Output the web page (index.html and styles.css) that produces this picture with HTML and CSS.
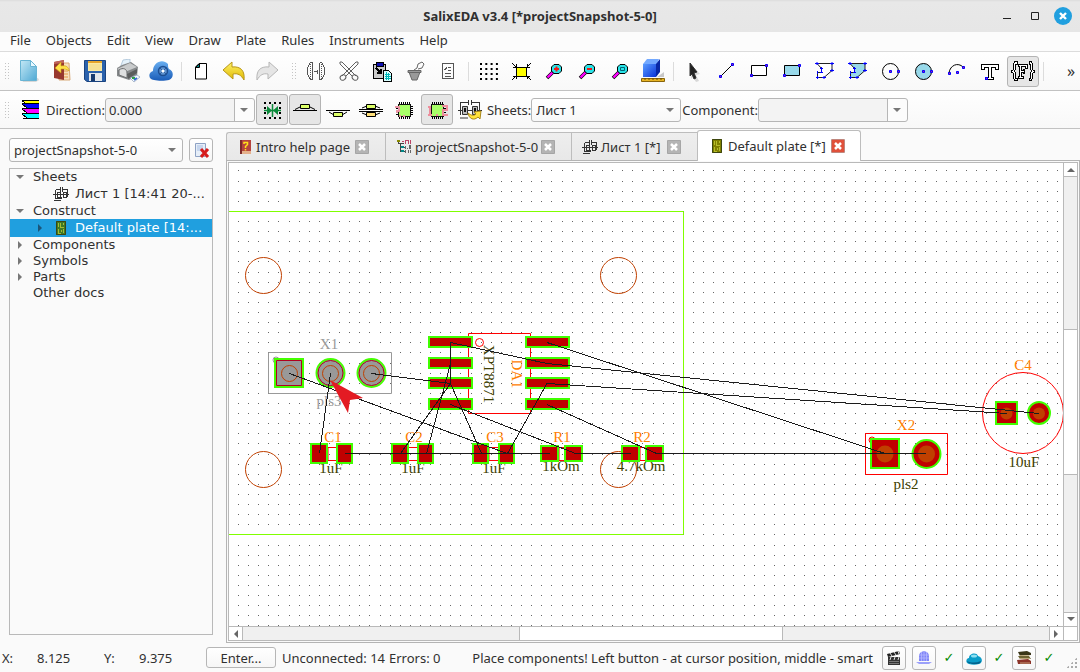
FILE: index.html
```html
<!DOCTYPE html>
<html lang="en">
<head>
<meta charset="utf-8">
<title>SalixEDA v3.4 [*projectSnapshot-5-0]</title>
<link rel="stylesheet" href="styles.css">
</head>
<body>
<svg class="defs" width="0" height="0" aria-hidden="true">
  <defs>
    <linearGradient id="page" x1="0" y1="0" x2="1" y2="1"><stop offset="0" stop-color="#c4e8f5"/><stop offset="1" stop-color="#4fa9d4"/></linearGradient>
    <linearGradient id="cube" x1="0" y1="0" x2="1" y2="1"><stop offset="0" stop-color="#5a9cff"/><stop offset="1" stop-color="#0b35d8"/></linearGradient>
    <linearGradient id="gold" x1="0" y1="0" x2="0" y2="1"><stop offset="0" stop-color="#fff36a"/><stop offset="1" stop-color="#e0b800"/></linearGradient>
    <linearGradient id="cloudfill" x1="0" y1="0" x2="0" y2="1"><stop offset="0" stop-color="#68aef0"/><stop offset="1" stop-color="#1a5cb8"/></linearGradient>
    <symbol id="sheet" viewBox="0 0 16 16"><g fill="none" stroke="#333" shape-rendering="crispEdges"><path d="M2.500 3.500H7M9 3.500H14.500M7.500 1v5M9.500 1v5M2.500 3.500v9M14.500 3.500v7M0 8.500H16M4.500 6.500h3v5h-3zM10.500 6.500h3v5h-3zM2.500 12.500h6v-2M1 14.500h7"/></g></symbol>
    <symbol id="plate" viewBox="0 0 16 16"><path d="M3 1h10v14H3z" fill="currentColor"/><path d="M5.500 3v4M7.500 3v4h3M10.500 3v2M5.500 9v4h2M8.500 10v2M10.500 9v4" fill="none" stroke="#c8d23a" stroke-opacity=".75" shape-rendering="crispEdges"/><path d="M3.500 1.500h9v13h-9z" fill="none" stroke="#3c4610"/></symbol>
    <symbol id="close" viewBox="0 0 14 14"><path d="M.5.5h13v13H.5z" fill="currentColor" stroke="#0003"/><path d="M4 4l6 6M10 4l-6 6" stroke="#fff" stroke-width="2.500"/></symbol>
    <symbol id="glass" viewBox="0 0 24 24"><path d="M5 19l6-6" stroke="#000" stroke-width="3.600"/><path d="M5.500 18.500l5-5" stroke="#f0f" stroke-width="2.400"/><path d="M12 5.500h5l2.500 2.500v4L17 14.500h-5L9.500 12V8z" fill="#28e4e8" stroke="#000"/></symbol>
  </defs>
</svg>

<header class="titlebar">
  <h1>SalixEDA v3.4 [*projectSnapshot-5-0]</h1>
  <div class="wincontrols">
    <button aria-label="Minimize"><svg width="10" height="16"><path d="M1 10.500h8" stroke="#222" shape-rendering="crispEdges"/></svg></button>
    <button aria-label="Maximize"><svg width="10" height="16"><path d="M1.500 4.500h7v7h-7z" fill="none" stroke="#222"/></svg></button>
    <button aria-label="Close"><svg width="18" height="18"><circle cx="9" cy="9" r="9" fill="#209fdf"/><path d="M6 6l6 6M12 6l-6 6" stroke="#fff" stroke-width="2.400"/></svg></button>
  </div>
</header>

<nav class="menubar" aria-label="Main menu">
  <button>File</button><button>Objects</button><button>Edit</button><button>View</button><button>Draw</button><button>Plate</button><button>Rules</button><button>Instruments</button><button>Help</button>
</nav>

<div class="toolbar" role="toolbar" aria-label="Tools">
  <span class="grip first"></span>
  <button aria-label="New"><svg viewBox="0 0 24 24"><path d="M5 21l16-2 1 2-3 2H6z" fill="#0002"/><path d="M3.500 1.500h10l6 6v14h-16z" fill="url(#page)" stroke="#68b4d4"/><path d="M13.500 1.500v6h6z" fill="#e8f8ff" stroke="#68b4d4"/></svg></button>
  <button aria-label="Open"><svg viewBox="0 0 24 24"><path d="M9 4h10l1 17H9z" fill="#f7dfbd" stroke="#d8a978"/><path d="M11 12h7M12 15h6M11 18h7" stroke="#e39a45"/><path d="M4 3l10-2v20L4 19z" fill="#98382e"/><path d="M4 3l10-2v3L4 5z" fill="#bf655a"/><path d="M5 9l6-6v4c5-1 8 1 8 5-2-2-4-2-8-2v4z" fill="#ffe24a" stroke="#c79b10" stroke-width=".6"/></svg></button>
  <button aria-label="Save"><svg viewBox="0 0 24 24"><path d="M1.500 1.500h21v21H4l-2.500-2z" fill="#2b62ac" stroke="#1b4480"/><path d="M5 2h14v10H5z" fill="#fbe9a0"/><path d="M5 2h14v2H5z" fill="#e6a52c"/><path d="M6 6h12M6 8h12M6 10h12" stroke="#f0d98a"/><path d="M6 14h13v8H6z" fill="#e3e8ec"/><path d="M8 15h4v7H8z" fill="#173b70"/></svg></button>
  <button aria-label="Print"><svg viewBox="0 0 24 24"><path d="M4 9L7 1l7-1v9z" fill="#e4f1fa" stroke="#9db9d1" stroke-width=".7"/><path d="M1 9l5-3 9-3 7 5-1 9-8 4L1 17z" fill="#86898b"/><path d="M1 10l13-6 7 4-12 5z" fill="#c9cbcc"/><path d="M3 11c4-3 8-1 8 3v5l-8-3z" fill="#dedfe0" stroke="#6c6e70"/><path d="M11 15l10-5v4l-9 6z" fill="#5a5c5d"/><path d="M14 19l7-3 3 2-6 5z" fill="#f6f9ff" stroke="#7890ad" stroke-width=".6"/><path d="M16 19h3" stroke="#2ca042" stroke-width="2"/><path d="M18 21l3-2" stroke="#356bd2" stroke-width="2"/></svg></button>
  <button aria-label="Cloud"><svg viewBox="0 0 24 24"><path d="M5 21C-1 21-1 13 4 12c0-8 9-13 15-7 0 2 0 4 1 5 5 2 5 9 0 11-4 1-11 1-15 0z" fill="url(#cloudfill)"/><circle cx="14" cy="12" r="4.500" fill="#5d92cf" stroke="#1c4e92" stroke-width="1.500"/><path d="M11 9l6 6M17 9l-6 6" stroke="#2d5b9c"/><circle cx="14" cy="12" r="1.500" fill="#fff"/></svg></button>
  <span class="sep"></span>
  <button aria-label="Blank page"><svg viewBox="0 0 24 24"><path d="M10 4.500h7.500v15.500h-11V8z" fill="#fff" stroke="#000"/><path d="M6.500 8.500l4-4v4z" fill="#008080" stroke="#000"/></svg></button>
  <button aria-label="Undo"><svg viewBox="0 0 24 24"><path d="M1 11l9-8v5c9-1 13 4 12 13-3-5-6-7-11-6v5z" fill="url(#gold)" stroke="#b8961a"/></svg></button>
  <button aria-label="Redo"><svg viewBox="0 0 24 24"><path d="M23 11l-9-8v5C5 7 1 12 2 21c3-5 6-7 11-6v5z" fill="#e5e5e5" stroke="#b7b7b7"/></svg></button>
  <span class="grip"></span>
  <button aria-label="Mirror"><svg viewBox="0 0 24 24" fill="none" stroke="#555" shape-rendering="crispEdges"><path d="M8.500 3.500v17M8.500 3.500h-2l-3 5v7l3 5h2M15.500 3.500v17M15.500 3.500h2l3 5v7l-3 5h-2M10 12.500h4M13.500 11v4"/><path d="M6.500 5v15M17.500 5v15" stroke-dasharray="1 1"/></svg></button>
  <button aria-label="Cut"><svg viewBox="0 0 24 24" fill="none" stroke="#606060"><path d="M3 3l2 0 14 14M21 3l-2 0L5 17M3 3v2l12 12M21 3v2L9 17"/><ellipse cx="6" cy="18.500" rx="3" ry="2.500" transform="rotate(-35 6 18.500)"/><ellipse cx="18" cy="18.500" rx="3" ry="2.500" transform="rotate(35 18 18.500)"/></svg></button>
  <button aria-label="Copy"><svg viewBox="0 0 24 24" shape-rendering="crispEdges"><path d="M3.500 5.500h12v14h-12z" fill="#ccc" stroke="#000"/><path d="M6 3h7v4H6z" fill="#1010b0" stroke="#000"/><path d="M6 9l5 5M11 10v4H7" stroke="#000" stroke-width="1.500" fill="none"/><path d="M13.500 11.500h5l3 3v8h-8z" fill="#d8ffff" stroke="#000"/><path d="M15 15h5M15 17h6M15 19h6M16.500 13v8M18.500 14v7" stroke="#0bb"/></svg></button>
  <button aria-label="Paste"><svg viewBox="0 0 24 24" fill="none" stroke="#666"><path d="M6 13h11l-3 8H9z" fill="#999"/><path d="M5 11.500h13v2H5z" fill="#999"/><path d="M11 11l3-2 1-4 4-2 2 2-2 4-4 1"/></svg></button>
  <button aria-label="Properties"><svg viewBox="0 0 24 24" fill="none" stroke="#555" shape-rendering="crispEdges"><path d="M6.500 4.500h11v15h-11z"/><path d="M12 8.500h3M8 10l1 1 2-3M12 11.500h3M9 14.500h6M9 17.500h6"/></svg></button>
  <span class="sep"></span>
  <button aria-label="Grid"><svg viewBox="0 0 24 24"><path d="M4 5h18M4 10h18M4 15h18M4 20h18" stroke="#000" stroke-width="2" stroke-dasharray="2 3.300"/></svg></button>
  <button aria-label="Fit"><svg viewBox="0 0 24 24" stroke="#000" shape-rendering="crispEdges"><path d="M7.500 8.500h10v9h-10z" fill="#ff0"/><path d="M3 4l4 4M7 5v3H4M22 4l-4 4M18 5v3h3M3 21l4-4M7 20v-3H4M22 21l-4-4M18 20v-3h3" fill="none"/></svg></button>
  <button aria-label="Zoom in"><svg viewBox="0 0 24 24"><use href="#glass"/><path d="M12 10h5M14.500 7.500v5" stroke="#f01818" stroke-width="2"/></svg></button>
  <button aria-label="Zoom out"><svg viewBox="0 0 24 24"><use href="#glass"/><path d="M12 10h5" stroke="#f01818" stroke-width="2"/></svg></button>
  <button aria-label="Zoom window"><svg viewBox="0 0 24 24"><use href="#glass"/><path d="M12.500 8.500h4v3h-4z" fill="none" stroke="#067"/></svg></button>
  <button aria-label="3D view"><svg viewBox="0 0 24 24"><path d="M16 18l7-5v5z" fill="#0003"/><path d="M2 5l4-5h12l-2 5z" fill="#73a9ff"/><path d="M2 5h13v13H2z" fill="url(#cube)"/><path d="M15 5l4-5v13l-4 5z" fill="#0828a5"/><path d="M.5 19.500h23v3H.5z" fill="#e6b323" stroke="#88640b"/><path d="M4 19v2M8 19v2M12 19v2M16 19v2M20 19v2" stroke="#6b4d05"/></svg></button>
  <span class="sep"></span>
  <button aria-label="Select"><svg viewBox="0 0 24 24"><path d="M11 7l8 8-4 1 3 6-3 1-3-5-2 2z" fill="#0002"/><path d="M9 4l7 9-3 1 2 5-2 1-2-5-2 2z" fill="#222" stroke="#333"/></svg></button>
  <button aria-label="Line"><svg viewBox="0 0 24 24"><path d="M6 18L18 6" stroke="#000"/><path d="M5.500 16.500h2v2h-2zM17.500 4.500h2v2h-2z" fill="#c0169a" stroke="#00f"/></svg></button>
  <button aria-label="Rectangle"><svg viewBox="0 0 24 24"><path d="M4.500 6.500h15v10h-15z" fill="#fff" stroke="#000"/><path d="M3.500 15.500h2v2h-2zM18.500 5.500h2v2h-2z" fill="#c0169a" stroke="#00f"/></svg></button>
  <button aria-label="Filled rectangle"><svg viewBox="0 0 24 24"><path d="M4.500 6.500h15v10h-15z" fill="#98d9ea" stroke="#000"/><path d="M3.500 15.500h2v2h-2zM18.500 5.500h2v2h-2z" fill="#c0169a" stroke="#00f"/></svg></button>
  <button aria-label="Polygon"><svg viewBox="0 0 24 24"><path d="M4 4.500h15v7l-8 7H4.500v-5h4v-4z" fill="#fff" stroke="#222"/><path d="M4 3v3M2 4.500h4M19 3v3M17 4.500h4M19 10v3M17 11.500h4M11 17v3M9 18.500h4M4.500 17v3M3 18.500h3M8.500 8v6M7 9.500h3M7 13.500h3M4.500 12v3" stroke="#00f"/></svg></button>
  <button aria-label="Filled polygon"><svg viewBox="0 0 24 24"><path d="M4 4.500h15v7l-8 7H4.500v-5h4v-4z" fill="#98d9ea" stroke="#222"/><path d="M4 3v3M2 4.500h4M19 3v3M17 4.500h4M19 10v3M17 11.500h4M11 17v3M9 18.500h4M4.500 17v3M3 18.500h3M8.500 8v6M7 9.500h3M7 13.500h3M4.500 12v3" stroke="#00f"/></svg></button>
  <button aria-label="Circle"><svg viewBox="0 0 24 24"><circle cx="11.500" cy="12.500" r="8" fill="none" stroke="#000"/><path d="M10.500 11.500h2v2h-2zM18.500 11.500h2v2h-2z" fill="#c0169a" stroke="#00f"/></svg></button>
  <button aria-label="Filled circle"><svg viewBox="0 0 24 24"><circle cx="11.500" cy="12.500" r="8" fill="#98d9ea" stroke="#000"/><path d="M10.500 11.500h2v2h-2zM18.500 11.500h2v2h-2z" fill="#c0169a" stroke="#00f"/></svg></button>
  <button aria-label="Arc"><svg viewBox="0 0 24 24"><path d="M4 14c1-8 9-11 14-6" fill="none" stroke="#000"/><path d="M3.500 13.500h2v2h-2zM11.500 12.500h2v2h-2zM17.500 7.500h2v2h-2z" fill="#c0169a" stroke="#00f"/></svg></button>
  <button aria-label="Text"><svg viewBox="0 0 24 24" shape-rendering="crispEdges"><path d="M3.500 5.500h17v5h-3v-2h-4v10h2v2h-7v-2h2v-10h-4v2h-3z" fill="#fff" stroke="#000"/><path d="M7.500 18.500h2v2h-2z" fill="#c0169a" stroke="#00f"/></svg></button>
  <button class="on" aria-label="Formatted text" aria-pressed="true"><svg viewBox="0 0 24 24" fill="#fff" stroke="#000" shape-rendering="crispEdges"><path d="M6 2.500H4l-1.500 2v6l-2 1.500v1l2 1.500v5l1.500 2h2v-2H4.500v-5l-1-2.500 1-2v-5H6zM18 2.500h2l1.500 2v6l2 1.500v1l-2 1.500v5l-1.500 2h-2v-2h1.500v-5l1-2.500-1-2v-5H18z"/><path d="M7.500 5.500h9v4h-2v-2h-4v4h2v-1h1v4h-1v-1h-2v4h2v2h-5v-2h1v-10h-1z"/></svg></button>
  <span class="sep"></span>
  <button class="more" aria-label="More tools">»</button>
</div>

<div class="toolbar" role="toolbar" aria-label="Placement">
  <span class="grip first"></span>
  <button aria-label="Layers"><svg viewBox="0 0 24 24" shape-rendering="crispEdges"><path d="M5 3h17v2H9z" fill="#ff0"/><path d="M5 6h17v4H10z" fill="#00f"/><path d="M5 11h17v4H10z" fill="#f0f"/><path d="M5 16h17v4H10z" fill="#0ff"/><path d="M5 2.500h17M5 5.500h17M5 10.500h17M5 15.500h17M6 20.500h16M5 3l5 3M5 6l5 4M5 11l5 4M5 16l5 4" stroke="#000"/></svg></button>
  <label for="direction">Direction:</label>
  <span class="combo editable"><select id="direction"><option>0.000</option></select></span>
  <button class="on" aria-label="Snap" aria-pressed="true"><svg viewBox="0 0 24 24"><path d="M4 5h18M4 20h18" stroke="#000" stroke-width="2" stroke-dasharray="2 3"/><path d="M5 9v2M5 14v2M20 9v2M20 14v2" stroke="#000" stroke-width="2"/><path d="M12.500 6v13M4 12.500h17" stroke="#0a8a3a" stroke-width="1.500"/><path d="M7 8l5 4.500L7 17zM18 8l-5 4.500 5 4.500z" fill="#0a8a3a"/></svg></button>
  <button class="on" aria-label="Top side" aria-pressed="true"><svg viewBox="0 0 24 24"><path d="M0 12.500h24" stroke="#000"/><path d="M2 11.500l6-3M22 11.500l-6-3" stroke="#000"/><path d="M7.500 6.500h9v4h-9z" fill="#dcff68" stroke="#000"/></svg></button>
  <button aria-label="Bottom side"><svg viewBox="0 0 24 24"><path d="M0 12.500h24" stroke="#000"/><path d="M3 14l5 3M21 14l-5 3" stroke="#000"/><path d="M7.500 14.500h9v4h-9z" fill="#dcff68" stroke="#000"/></svg></button>
  <button aria-label="Both sides"><svg viewBox="0 0 24 24"><path d="M0 11.500h24M0 13.500h24" stroke="#000"/><path d="M3 10l5-2M21 10l-5-2M3 15l5 2M21 15l-5 2" stroke="#000"/><path d="M7.500 6.500h9v4h-9z" fill="#dcff68" stroke="#000"/><path d="M7.500 14.500h9v4h-9z" fill="#ffdf7a" stroke="#000"/></svg></button>
  <button aria-label="Component query"><svg viewBox="0 0 24 24" shape-rendering="crispEdges"><path d="M7.500 4v17M9.500 4v17M11.500 4v17M13.500 4v17M15.500 4v17M17.500 4v17M4 8.500h17M4 10.500h17M4 12.500h17M4 14.500h17M4 16.500h17" stroke="#000"/><path d="M6.500 6.500h12v12h-12z" fill="#a8ff68" stroke="#111"/><path d="M3 9h4v4H5v2M7 17.500h2M11 17.500h2" fill="none" stroke="#e995a5" stroke-width="2"/></svg></button>
  <button class="on" aria-label="Component numbering" aria-pressed="true"><svg viewBox="0 0 24 24" shape-rendering="crispEdges"><path d="M7.500 4v17M9.500 4v17M11.500 4v17M13.500 4v17M15.500 4v17M17.500 4v17M4 8.500h17M4 10.500h17M4 14.500h17M4 16.500h17" stroke="#000"/><path d="M6.500 6.500h12v12h-12z" fill="#a8ff68" stroke="#111"/><path d="M3 9h2v8M3 17h4M11 17h2M17 8h5v4h-4v5h5" fill="none" stroke="#ee8d9c" stroke-width="2"/></svg></button>
  <button aria-label="Sheet transfer"><svg viewBox="0 0 24 24"><path d="M2 4.500h9M13 4.500h9M10.500 2v5M13.500 2v5M2.500 4v13M21.500 4v12M0 12.500h24M2 20h8" stroke="#333" fill="none"/><path d="M4.500 8.500h5v8h-5zM14.500 8.500h5v8h-5z" fill="#bbb" stroke="#333"/><path d="M7 10v4M17 10v4" stroke="#111" stroke-width="2"/><path d="M10 15c4 3 6 3 8 1l-2-2 7-1-1 8-2-2c-4 4-9 2-10-4z" fill="#ffe23a" stroke="#a8861a"/></svg></button>
  <label for="sheets">Sheets:</label>
  <span class="combo"><select id="sheets"><option>Лист 1</option></select></span>
  <label for="component">Component:</label>
  <span class="combo editable"><select id="component"><option></option></select></span>
</div>

<main class="workspace">
  <aside class="side">
    <div class="siderow">
      <span class="combo"><select aria-label="Project"><option>projectSnapshot-5-0</option></select></span>
      <button class="small" aria-label="Close project"><svg width="18" height="18"><path d="M3.500 2.500h10v13h-10z" fill="#e6eef8" stroke="#8ea2c4"/><path d="M5 4h6v6H5z" fill="#c6d6ee"/><path d="M9 8l7 8M16 8l-7 8" stroke="#d61b1b" stroke-width="3"/></svg></button>
    </div>
    <ul class="tree">
      <li><i class="tri open"></i>Sheets</li>
      <li class="leaf"><i class="tri none"></i><svg width="16" height="16"><use href="#sheet"/></svg><span>Лист 1 [14:41 20-...</span></li>
      <li><i class="tri open"></i>Construct</li>
      <li class="leaf selected"><i class="tri"></i><svg class="pgreen" width="16" height="16"><use href="#plate"/></svg><span>Default plate [14:...</span></li>
      <li><i class="tri"></i>Components</li>
      <li><i class="tri"></i>Symbols</li>
      <li><i class="tri"></i>Parts</li>
      <li><i class="tri none"></i>Other docs</li>
    </ul>
  </aside>

  <section class="editor">
    <div class="tabs">
      <div class="tab t1"><button><svg width="16" height="16"><path d="M3 1h11v14H3z" fill="#b5443e"/><path d="M3 12h11v3H3z" fill="#e5b08c"/><path d="M3 1h2v14H3z" fill="#7d2a2a"/><path d="M7 5V3.500h3.500v2L8.500 7.500v1.500M8.500 10v1.500" fill="none" stroke="#ffe21a" stroke-width="1.500"/></svg>Intro help page</button><button class="x" aria-label="Close tab"><svg width="14" height="14"><use href="#close"/></svg></button></div>
      <div class="tab t2"><button><svg width="16" height="16" shape-rendering="crispEdges"><path d="M2.500 2v3M4.500 5v8M2 4.500h6M5 8.500h4M5 12.500h4" stroke="#444"/><path d="M1 1h3v2H1z" fill="#880"/><path d="M6 2.500h2M9.500 1v4M10 1.500h2M12.500 1v4M14.500 1v4" stroke="#b46"/><path d="M5 7h3v2H5zM5 11h3v2H5z" fill="#088"/><path d="M9.500 7v3M11 9.500h1M13 6l2 4M15 6l-2 4M9.500 11v3M12.500 11v3M14.500 11v3" stroke="#666" fill="none"/></svg>projectSnapshot-5-0</button><button class="x" aria-label="Close tab"><svg width="14" height="14"><use href="#close"/></svg></button></div>
      <div class="tab t3"><button><svg width="16" height="16"><use href="#sheet"/></svg>Лист 1 [*]</button><button class="x" aria-label="Close tab"><svg width="14" height="14"><use href="#close"/></svg></button></div>
      <div class="tab t4 active"><button><svg class="polive" width="16" height="16"><use href="#plate"/></svg>Default plate [*]</button><button class="x" aria-label="Close tab"><svg width="14" height="14"><use href="#close"/></svg></button></div>
    </div>
    <div class="frame">
      <div class="view">
        <div class="canvas">
          <svg class="board" width="100%" height="100%" role="img" aria-label="Default plate">
            <g transform="translate(-229 -163)">
              <path id="dots" fill="#666" shape-rendering="crispEdges"/>
              <path d="M228 211.500H683.500V534.500H228" fill="none" stroke="#80ff00"/>
              <g class="hole"><circle cx="263.500" cy="275.500" r="18"/><circle cx="618.500" cy="275.500" r="18"/><circle cx="263.500" cy="469.500" r="18"/><circle cx="618.500" cy="469.500" r="18"/></g>
              <g class="name">
                <text x="333" y="442">C1</text><text x="414" y="442">C2</text><text x="495" y="442">C3</text><text x="562" y="442">R1</text><text x="642" y="442">R2</text><text x="906" y="430">X2</text><text x="1023" y="370">C4</text>
                <text transform="translate(512 374) rotate(90)">DA1</text>
              </g>
              <g class="value">
                <text x="331" y="473">1uF</text><text x="413" y="473">1uF</text><text x="494" y="473">1uF</text><text x="561" y="471">1kOm</text><text x="641" y="471">4.7kOm</text><text x="906" y="489">pls2</text><text x="1024" y="467">10uF</text>
                <text transform="translate(484 374) rotate(90)">XPT8871</text>
              </g>
              <g class="muted"><text x="329" y="349">X1</text><text x="329" y="406">pls3</text></g>
              <g fill="none" stroke="#999"><path d="M268.500 352.500h123v41h-123z"/><circle cx="276" cy="360" r="3"/></g>
              <g fill="#999" stroke="#4f0" stroke-width="2"><path d="M275 359h28v28h-28z"/><circle cx="330.500" cy="373" r="14"/><circle cx="371.500" cy="373" r="14"/></g>
              <g fill="none" stroke="#b00020"><path d="M276.500 360.500h25v25h-25z"/><circle cx="330.500" cy="373" r="12.500"/><circle cx="371.500" cy="373" r="12.500"/></g>
              <g class="hole"><circle cx="289.500" cy="373.500" r="8"/><circle cx="330.500" cy="373.500" r="8"/><circle cx="371.500" cy="373.500" r="8"/></g>
              <g fill="none" stroke="#f00"><path d="M468.500 333.500h62v80h-62zM328 447.500h10v13h-10zM408 447.500h10v13h-10zM489 447.500h10v13h-10zM559 447.500h6v13h-6zM640 447.500h6v13h-6zM865.500 433.500h82v41h-82z"/><circle cx="479.500" cy="342.500" r="4"/><circle cx="872" cy="440" r="3"/><circle cx="1023" cy="413" r="40.500"/></g>
              <g class="pad">
                <path d="M429 337h43v10h-43zM429 358h43v10h-43zM429 378h43v10h-43zM429 399h43v10h-43zM526 337h43v10h-43zM526 358h43v10h-43zM526 378h43v10h-43zM526 399h43v10h-43z"/>
                <path d="M311 444h16v19h-16zM337 444h15v19h-15zM392 444h16v19h-16zM418 444h15v19h-15zM473 444h15v19h-15zM499 444h15v19h-15zM541 446h17v15h-17zM565 446h17v15h-17zM622 446h17v15h-17zM646 446h17v15h-17z"/>
                <path d="M871 439h28v29h-28zM996 402h21v22h-21z"/><circle cx="926.500" cy="454" r="14"/><circle cx="1039" cy="413" r="11"/>
              </g>
              <g fill="#c04000"><circle cx="885" cy="454" r="8.500"/><circle cx="926.500" cy="454" r="8.500"/><circle cx="1006.500" cy="413.500" r="6"/><circle cx="1039" cy="413.500" r="6"/></g>
              <path class="air" d="M289.500 373.500L507 453.500M330.500 373.500L319.500 453.500M371.500 373.500L450.500 383.500M345 453.500H550M575 453.500H631M656 453.500H926M450.500 383.500V342.500L547 363.500L1039 413.500M547 383.500L1007 413.500M547 342.500L885 453.500M450.500 363.500L426.500 453.500M450.500 383.500L400.500 453.500M450.500 383.500L481.500 453.500M450.500 404.500L575.500 453.500M547 383.500L507.500 453.500M547 404.500L656.500 453.500"/>
              <path d="M330 380L363 398L350 400L348 413Z" fill="#e31b23"/>
            </g>
          </svg>
        </div>
        <div class="vbar"><button aria-label="Scroll up"><i class="up"></i></button><span class="track a"></span><span class="handle b"></span><span class="track c"></span><button aria-label="Scroll down"><i class="down"></i></button></div>
        <div class="hbar"><button aria-label="Scroll left"><i class="left"></i></button><span class="track a"></span><span class="handle b"></span><span class="track c"></span><button aria-label="Scroll right"><i class="right"></i></button></div>
        <div class="corner"></div>
      </div>
    </div>
  </section>
</main>

<footer class="status">
  <span class="lab">X:</span><output class="coord">8.125</output><span class="lab">Y:</span><output class="coord">9.375</output>
  <button class="enter">Enter...</button>
  <span class="count">Unconnected: 14</span><span>Errors: 0</span>
  <span class="hint">Place components! Left button - at cursor position, middle - smart</span>
  <button class="small" aria-label="Record"><svg width="16" height="16"><path d="M2 7h12v8H2z" fill="#333"/><path d="M1 4l12-3 1 3L2 7z" fill="#222"/><path d="M4 3l2 3M8 2l2 3M12 1l1 3M5 7l-1 3M9 7l-1 3M13 7l-1 3" stroke="#ddd"/><path d="M3 11.500h10M3 13.500h10" stroke="#777"/></svg></button>
  <button class="small" aria-label="Server"><svg width="16" height="16"><path d="M3 11V6q0-4 5-5 5 1 5 5v5z" fill="#8187f7"/><path d="M0 12h16l-3 2H3z" fill="#9ba0fa"/><path d="M5.500 2v9M8 1v10M10.500 2v9M3 5h10M3 8h10" stroke="#b6b9ff" stroke-width=".8"/></svg></button><span class="ok">✓</span>
  <button class="small" aria-label="Cloud status"><svg width="16" height="16"><path d="M3 14C-1 13 0 8 3 8c0-5 8-6 9-2 5 1 5 7 1 8-3 1-7 1-10 0z" fill="#0a9cc8"/><path d="M1 11c4 2 9 2 14 0-1 3-3 3-6 3s-7 0-8-3z" fill="#04618a"/><ellipse cx="8" cy="6" rx="3" ry="1.500" fill="#8de0f2"/></svg></button><span class="ok">✓</span>
  <button class="small" aria-label="Library"><svg width="16" height="16"><path d="M2 2l9-1 4 2v2L4 6z" fill="#3a3518"/><path d="M2 6h11l2 3H4z" fill="#6d6332"/><path d="M1 10l11-1 3 2v3H2z" fill="#8b3328"/><path d="M4 5.500h9M4 8.500h10M4 13h10" stroke="#d0b98c" stroke-width=".8"/></svg></button><span class="ok">✓</span>
  <span class="sizegrip"></span>
</footer>
<script src="grid.js"></script>
</body>
</html>
```

FILE: styles.css
```css
* { box-sizing: border-box; }
body {
  margin: 0;
  min-height: 100vh;
  display: flex;
  flex-direction: column;
  background: #fafafa;
  color: #303030;
  font: 13px/16px "Noto Sans", "Open Sans", sans-serif;
}
.defs { position: absolute; }
button, select { font: inherit; color: inherit; margin: 0; }
button { padding: 0; border: 0; background: none; }
svg { display: block; flex: none; }

.titlebar {
  display: grid;
  grid-template-columns: 1fr auto 1fr;
  align-items: center;
  height: 32px;
  background: linear-gradient(#dcdcdc, #e8e8e8 2px, #e6e6e6);
}
.titlebar h1 { grid-column: 2; margin: 0; font-size: 13px; line-height: 16px; font-weight: 700; }
.wincontrols { display: flex; justify-content: flex-end; align-items: center; gap: 18px; padding-right: 8px; }
.wincontrols button:last-child { margin-left: -4px; }

.menubar {
  display: flex;
  align-items: flex-start;
  gap: 15px;
  height: 20px;
  padding: 0 10px;
  border-bottom: 1px solid #dcdcdc;
  background: #fcfcfc;
}

.toolbar {
  display: flex;
  align-items: center;
  gap: 1px;
  height: 39px;
  border-bottom: 1px solid #c2c2c2;
  background: linear-gradient(#fff, #f8f8f8);
}
.toolbar + .toolbar { height: 38px; }
.toolbar label { margin-right: -1px; }
.toolbar button {
  display: flex;
  align-items: center;
  justify-content: center;
  width: 32px;
  height: 31px;
  flex: none;
  border: 1px solid transparent;
  border-radius: 3px;
}
.toolbar button svg { width: 24px; height: 24px; }
.toolbar button.on { background: #e6e6e6; border-color: #b4b4b4; }
.toolbar button.more { margin-left: auto; width: 18px; font-size: 16px; }
.grip { width: 15px; height: 16px; flex: none; background: repeating-linear-gradient(#c4c4c4 0 1px, transparent 1px 3px) 8px 0 / 1px 16px no-repeat, repeating-linear-gradient(#c4c4c4 0 1px, transparent 1px 3px) 11px 0 / 1px 16px no-repeat; }
.grip.first { width: 12px; background-position: 5px 0, 8px 0; }
.sep { width: 6px; height: 19px; flex: none; background: linear-gradient(#dcdcdc, #dcdcdc) 3px 0 / 1px 19px no-repeat; }

.combo { position: relative; display: flex; width: 150px; height: 24px; }
.combo select {
  appearance: none;
  width: 100%;
  padding: 0 20px 0 4px;
  border: 1px solid #b6b6b6;
  border-radius: 3px;
  background: linear-gradient(#fff, #f8f8f8);
}
.combo.editable select { padding-left: 3px; background: linear-gradient(90deg, #f3f3f3 calc(100% - 20px), #b6b6b6 calc(100% - 20px), #b6b6b6 calc(100% - 19px), #fcfcfc calc(100% - 19px)); }
.combo::after {
  content: "";
  position: absolute;
  right: 7px;
  top: 10px;
  border: 4px solid transparent;
  border-top-color: #777;
  border-bottom: 0;
  pointer-events: none;
}
.small {
  display: flex;
  align-items: center;
  justify-content: center;
  width: 24px;
  height: 24px;
  flex: none;
  border: 1px solid #b6b6b6;
  border-radius: 3px;
  background: linear-gradient(#fff, #f6f6f6);
}

.workspace { flex: 1; display: flex; min-height: 0; }
.side { width: 226px; flex: none; display: flex; flex-direction: column; gap: 6px; padding: 9px 13px 8px 9px; }
.siderow { display: flex; gap: 6px; }
.siderow .combo { flex: 1; }
.tree {
  flex: 1;
  margin: 0;
  padding: 0;
  list-style: none;
  border: 1px solid #b9b9b9;
  font: 13px/16px "DejaVu Sans", sans-serif;
}
.tree li { display: flex; align-items: center; height: 16px; padding-left: 6px; }
.tree li.leaf { height: 18px; padding-left: 26px; gap: 6px; }
.tree span { flex: 1; white-space: nowrap; }
.tree .selected { background: #209fdf; color: #fff; }
.tri { width: 17px; height: 8px; flex: none; }
.tree .leaf .tri { width: 11px; }
.tri::before { content: ""; display: block; width: 0; margin-left: 2px; border: 4px solid transparent; border-left-color: #777; border-right: 0; }
.tri.open::before { margin: 2px 0 0; border: 4px solid transparent; border-top-color: #777; border-bottom: 0; }
.tri.none::before { display: none; }
.selected .tri::before { border-left-color: #1a557a; }
.pgreen { color: #3f7a26; }
.polive { color: #808000; }

.editor { flex: 1; min-width: 0; display: flex; flex-direction: column; padding-top: 1px; }
.tabs { display: flex; align-items: flex-end; height: 30px; }
.tab {
  display: flex;
  align-items: center;
  justify-content: space-between;
  height: 28px;
  padding: 0 16px 0 10px;
  border: 1px solid #bdbdbd;
  border-width: 1px 0 0 1px;
  background: linear-gradient(#eee, #e8e8e8);
}
.tab button { display: flex; align-items: center; gap: 3px; white-space: nowrap; }
.tab .x { color: #b4b4b4; }
.t1 { width: 159px; border-radius: 3px 0 0 0; }
.t2 { width: 186px; }
.t3 { width: 126px; }
.t4 { width: 164px; }
.tab.active { height: 31px; margin-bottom: -1px; padding: 0 15px 0 11px; border-right-width: 1px; background: #fff; border-radius: 3px 3px 0 0; position: relative; }
.active .x { color: #e0503a; }
.frame { flex: 1; display: flex; padding: 1px; border: 1px solid #b4b4b4; }
.view {
  flex: 1;
  display: grid;
  grid-template-columns: 1fr 14px;
  grid-template-rows: 1fr 14px;
  border: 1px solid #b9b9b9;
  background: #fff;
}
.canvas { position: relative; overflow: hidden; min-height: 0; }
.board { position: absolute; inset: 0; }
.board text { font: 15px "Liberation Serif", serif; text-anchor: middle; }
.name { fill: #ff8000; }
.value { fill: #404000; }
.muted { fill: #999; }
.hole { fill: none; stroke: #c04000; }
.pad { fill: #c00000; stroke: #40ff00; stroke-width: 2px; }
.air { fill: none; stroke: #1c1c1c; shape-rendering: crispEdges; }

.vbar, .hbar { display: flex; }
.vbar { flex-direction: column; border-left: 1px solid #b9b9b9; }
.hbar { border-top: 1px solid #b9b9b9; }
.corner { border: 1px solid #b9b9b9; border-width: 1px 0 0 1px; }
.vbar button, .hbar button { display: grid; place-items: center; width: 13px; height: 13px; flex: none; }
.track { background: #f0f0f0; }
.handle { background: #fff; }
.vbar span { border-top: 1px solid #b9b9b9; }
.vbar .c { border-bottom: 1px solid #b9b9b9; }
.hbar span { border-left: 1px solid #b9b9b9; }
.hbar .c { border-right: 1px solid #b9b9b9; }
.vbar .a { flex: 153; }
.vbar .b { flex: 146; }
.vbar .c { flex: 138; }
.hbar .a { flex: 277; }
.hbar .b { flex: 263; }
.hbar .c { flex: 267; }
.vbar i, .hbar i { border: 4px solid transparent; }
.vbar .up { border-top: 0; border-bottom-color: #666; }
.vbar .down { border-bottom: 0; border-top-color: #666; }
.hbar .left { border-left: 0; border-right-color: #666; }
.hbar .right { border-right: 0; border-left-color: #666; }

.status { display: flex; align-items: center; height: 29px; padding: 0 2px; white-space: nowrap; }
.lab { width: 35px; }
.coord { width: 67px; }
.enter { width: 70px; height: 21px; border: 1px solid #b6b6b6; border-radius: 3px; background: linear-gradient(#fff, #f6f6f6); margin-right: 6px; }
.count { width: 107px; }
.hint { margin-left: auto; margin-right: 9px; }
.status .small + .small { margin-left: 6px; }
.ok { width: 26px; text-align: center; color: #008a00; font: 13px/16px "DejaVu Sans", sans-serif; }
.sizegrip { width: 12px; height: 12px; margin: 10px 0 0 4px; background: radial-gradient(#aaa 1px, transparent 1px) 0 0 / 4px 4px; clip-path: polygon(100% 0, 100% 100%, 0 100%); }
```

FILE: grid.js
```js
// Grid nodes, snapped to whole pixels across the visible sheet.
const step = 10.11;
let d = "";
for (let row = 0; row < 120; row++) {
  const y = Math.round(170.45 + row * step);
  for (let col = 0; col < 200; col++) {
    d += "M" + Math.round(238 + col * step) + " " + y + "h1v1h-1z";
  }
}
document.getElementById("dots").setAttribute("d", d);
```
